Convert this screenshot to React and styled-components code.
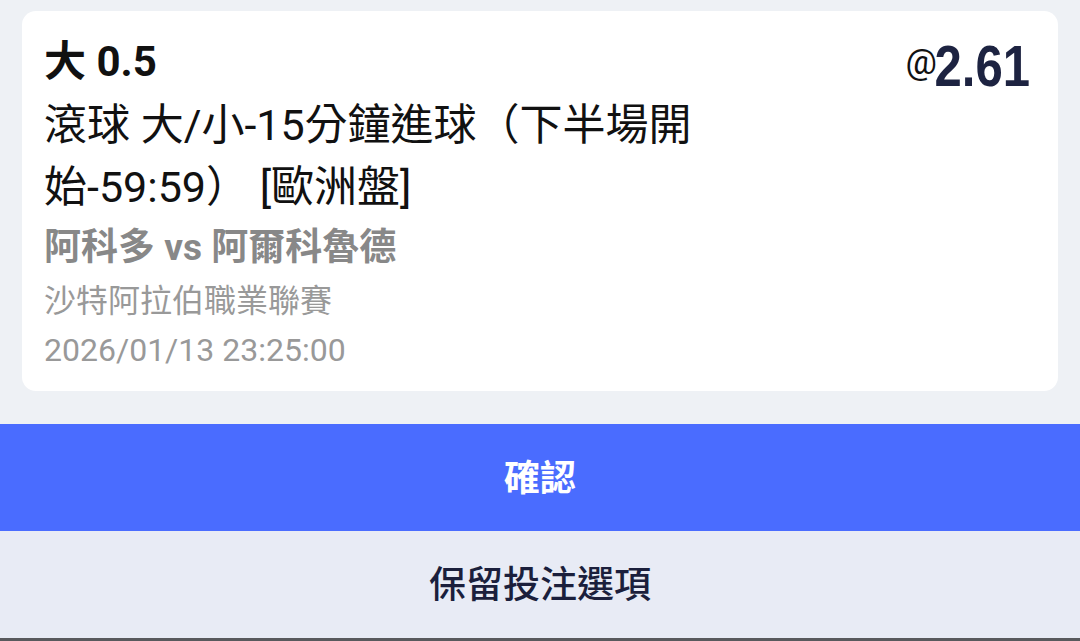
import React from "react";
import styled, { createGlobalStyle } from "styled-components";

const Global = createGlobalStyle`
  html, body { margin: 0; padding: 0; background: #eef1f5; }
  body { font-family: Roboto, "Noto Sans CJK TC", sans-serif; -webkit-font-smoothing: antialiased; }
  * { box-sizing: border-box; }
`;

const Page = styled.div`
  width: 1080px;
  height: 641px;
  background: #eef1f5;
  display: flex;
  flex-direction: column;
  overflow: hidden;
`;

const CardWrap = styled.div`
  padding: 11px 22px 0;
`;

const Card = styled.div`
  background: #ffffff;
  border-radius: 14px;
  height: 380px;
  padding: 25px 28px 0 22px;
  display: flex;
  justify-content: space-between;
  align-items: flex-start;
`;

const Info = styled.div`
  display: flex;
  flex-direction: column;
  width: 700px;
`;

const Selection = styled.div`
  font-size: 42px;
  font-weight: 700;
  line-height: 52px;
  color: #111111;
`;

const Market = styled.div`
  margin-top: 6px;
  font-size: 43px;
  font-weight: 400;
  line-height: 62px;
  color: #111111;
`;

const Teams = styled.div`
  margin-top: 6px;
  font-size: 37px;
  font-weight: 700;
  line-height: 48px;
  color: #888888;
`;

const League = styled.div`
  margin-top: 6px;
  font-size: 32px;
  line-height: 46px;
  color: #999999;
`;

const DateTime = styled.div`
  margin-top: 3px;
  font-size: 32px;
  line-height: 46px;
  color: #999999;
`;

const Odds = styled.div`
  display: flex;
  align-items: center;
  margin-top: -2px;
  height: 64px;
`;

const At = styled.span`
  font-family: Roboto, sans-serif;
  font-size: 35px;
  line-height: 1;
  color: #111111;
  margin: 0 -18px 8px 0;
`;

const Price = styled.span`
  display: inline-block;
  font-family: "Liberation Sans", Roboto, sans-serif;
  font-weight: 700;
  font-size: 57px;
  line-height: 1;
  color: #1d2341;
  transform: scaleX(0.86);
  transform-origin: right center;
`;

const Button = styled.button`
  width: 100%;
  height: 107px;
  border: none;
  margin: 0;
  padding: 0 0 6px;
  font-family: "Noto Sans CJK TC", sans-serif;
  font-size: ${(p) => (p.$primary ? "36px" : "37px")};
  font-weight: ${(p) => (p.$primary ? 700 : 500)};
  color: ${(p) => (p.$primary ? "#ffffff" : "#1b1f3c")};
  background: ${(p) => (p.$primary ? "#4a6cff" : "#e8ebf5")};
  display: flex;
  align-items: center;
  justify-content: center;
`;

const Actions = styled.div`
  margin-top: 33px;
  display: flex;
  flex-direction: column;
`;

const BottomLine = styled.div`
  height: 3px;
  background: #58595d;
`;

export default function App() {
  return (
    <Page>
      <Global />
      <CardWrap>
        <Card>
          <Info>
            <Selection>大 0.5</Selection>
            <Market>滾球 大/小-15分鐘進球（下半場開始-59:59） [歐洲盤]</Market>
            <Teams>阿科多 vs 阿爾科魯德</Teams>
            <League>沙特阿拉伯職業聯賽</League>
            <DateTime>2026/01/13 23:25:00</DateTime>
          </Info>
          <Odds>
            <At>@</At>
            <Price>2.61</Price>
          </Odds>
        </Card>
      </CardWrap>
      <Actions>
        <Button $primary>確認</Button>
        <Button>保留投注選項</Button>
      </Actions>
      <BottomLine />
    </Page>
  );
}
